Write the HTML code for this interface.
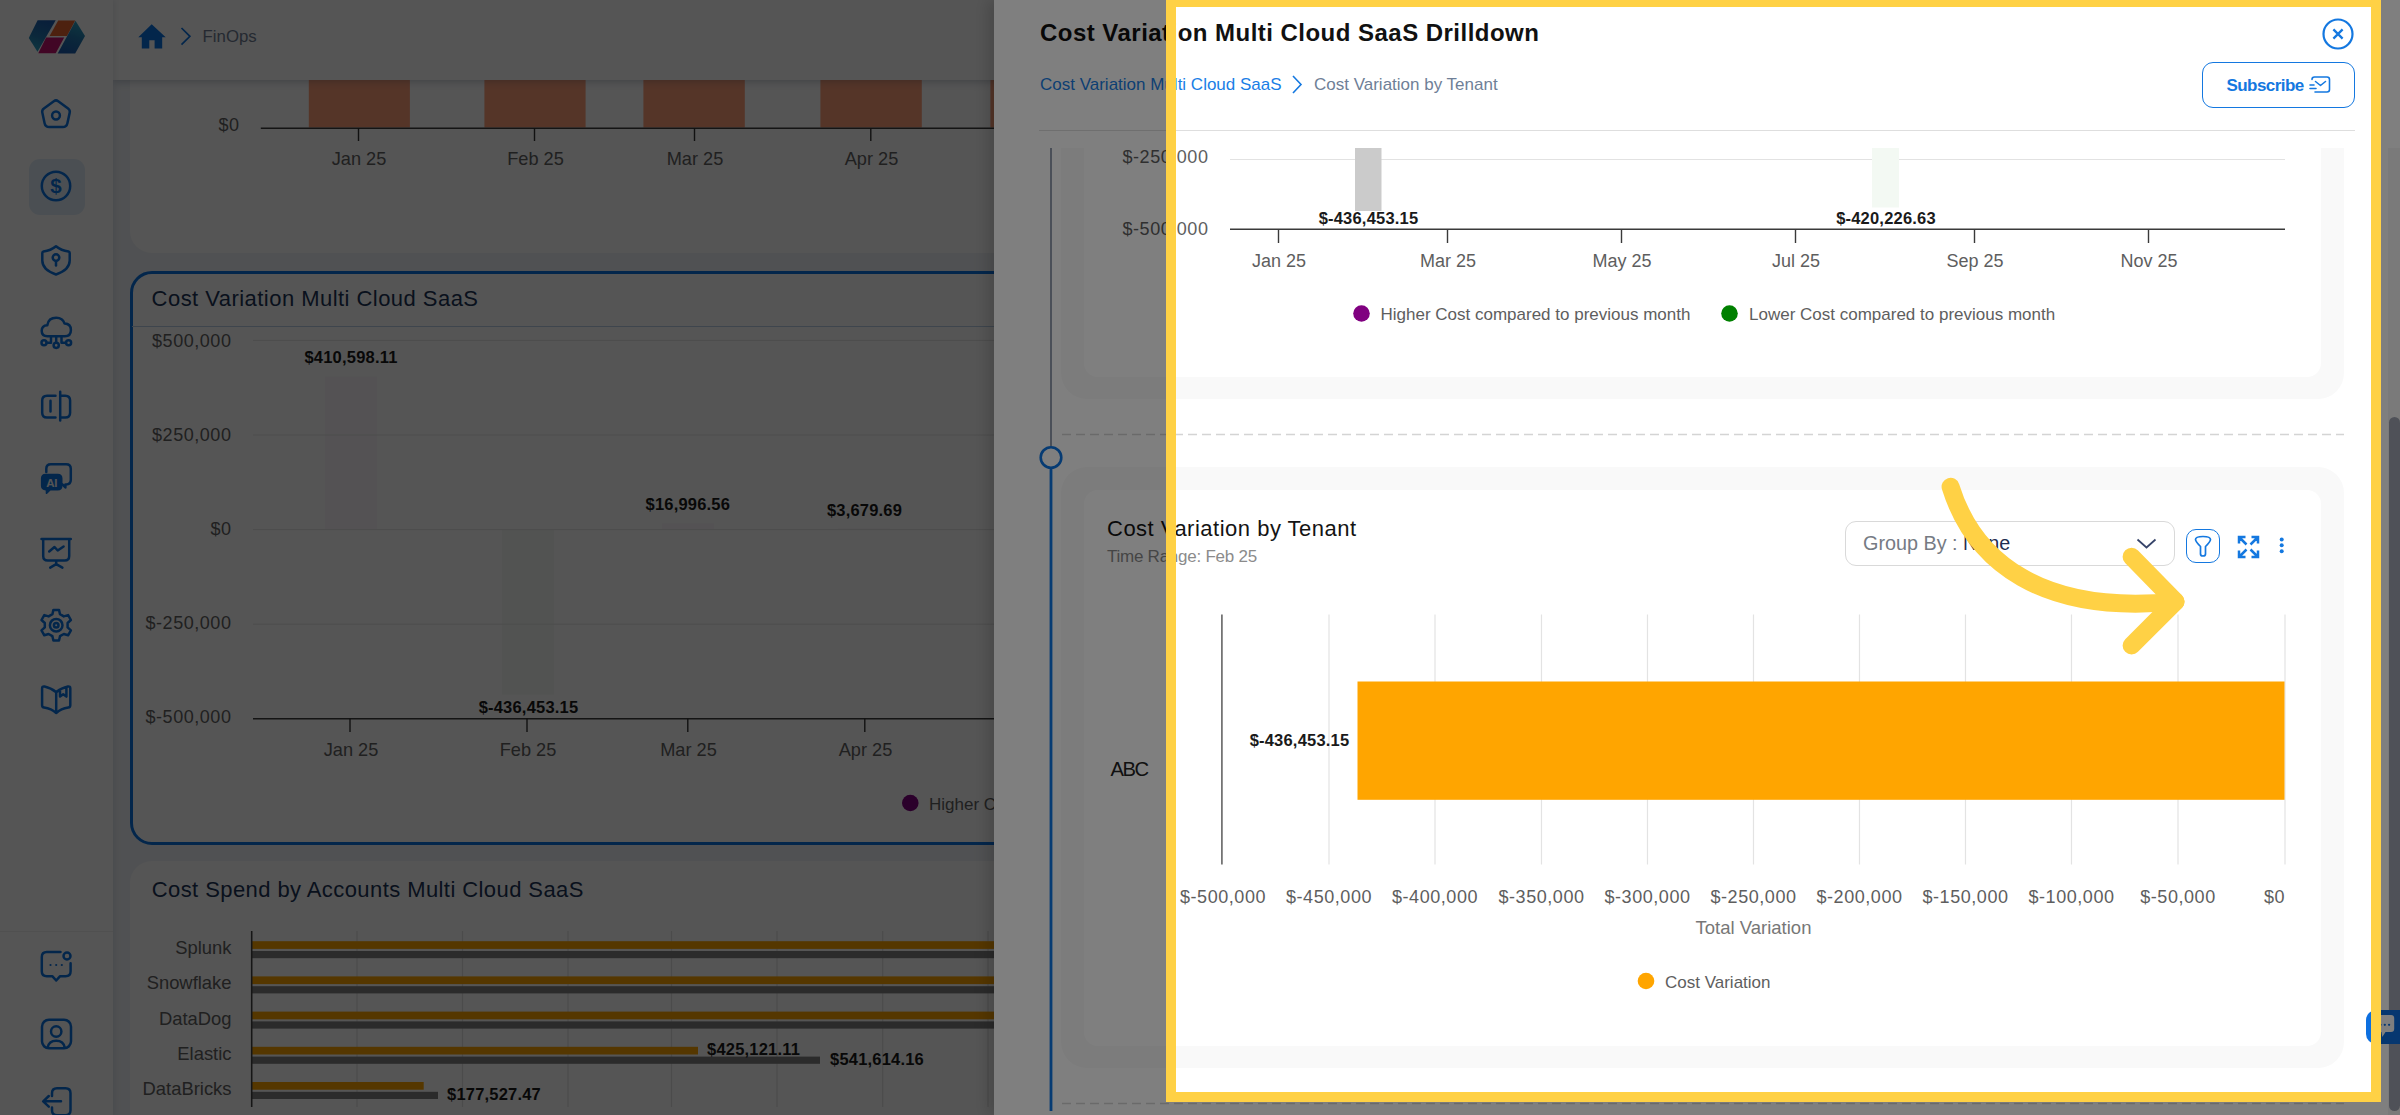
<!DOCTYPE html>
<html lang="en">
<head>
<meta charset="utf-8">
<title>Cost Variation Multi Cloud SaaS Drilldown</title>
<style>
*{box-sizing:border-box;margin:0;padding:0}
html,body{width:2400px;height:1115px;overflow:hidden;background:#fff}
body{font-family:"Liberation Sans",sans-serif;color:#1a2b4a;position:relative}
.abs{position:absolute}
svg{position:absolute;left:0;top:0;overflow:visible}
svg text{font-family:"Liberation Sans",sans-serif}
/* ---------- base app ---------- */
#app{position:absolute;left:0;top:0;width:2400px;height:1115px;background:#f1f4f8;overflow:hidden}
#sidebar{position:absolute;left:0;top:0;width:113px;height:1115px;background:#fff;z-index:3;box-shadow:2px 0 6px rgba(40,60,90,.1)}
#sidebar .sep{position:absolute;left:0;top:931px;width:113px;height:1px;background:#f0f0f0}
#sidebar .sel{position:absolute;left:29px;top:158.5px;width:56px;height:56.5px;border-radius:11px;background:#e2eef9}
#topbar{position:absolute;left:113px;top:0;width:2287px;height:79.8px;background:#fff;z-index:2;box-shadow:0 2px 8px rgba(40,60,90,.28)}
#topbar .crumb{position:absolute;left:89.6px;top:26.6px;font-size:16.8px;color:#6f7d94}
.card{position:absolute;background:#fff;border-radius:22px}
#card1{left:130px;top:-40px;width:2240px;height:293px}
#card2{left:130px;top:270.8px;width:2240px;height:574.2px;border:3.1px solid #0b73e2}
#card3{left:130px;top:860.6px;width:2240px;height:400px}
.ctitle{position:absolute;left:18.6px;font-size:22px;letter-spacing:.46px;color:#1d3557;white-space:nowrap}
/* ---------- overlays ---------- */
#backdrop{position:absolute;left:0;top:0;width:2400px;height:1115px;background:rgba(0,0,0,.33);z-index:10}
#drawer{position:absolute;left:994px;top:0;width:1406px;box-shadow:-6px 0 14px rgba(0,0,0,.16);height:1115px;background:#fff;z-index:11;overflow:hidden}
#dim{position:absolute;left:1166px;top:-3px;width:1214.5px;height:1104.8px;box-shadow:0 0 0 3000px rgba(0,0,0,.5);z-index:20;pointer-events:none}
#hl{position:absolute;left:1166px;top:-3px;width:1214.5px;height:1104.8px;border:10px solid #ffd145;border-right-width:10.3px;z-index:21}
#arrow{z-index:22}
</style>
</head>
<body>
<div id="app">
  <div id="sidebar"><div class="sel"></div><div class="sep"></div><svg width="113" height="1115" viewBox="0 0 113 1115">
<defs>
<linearGradient id="lg1" x1="0.6" y1="0" x2="0.3" y2="1"><stop offset="0" stop-color="#1c5cad"/><stop offset=".55" stop-color="#2278b0"/><stop offset="1" stop-color="#2ba3c2"/></linearGradient>
<linearGradient id="lg2" x1="0.7" y1="0" x2="0.4" y2="1"><stop offset="0" stop-color="#2ba3c2"/><stop offset=".5" stop-color="#2278b0"/><stop offset="1" stop-color="#1c5cad"/></linearGradient>
</defs>
<!-- logo -->
<polygon points="37.600,20.300 55.700,20.300 37.500,51.700 28.800,37.900" fill="url(#lg1)"/>
<polygon points="58.200,20.500 75.200,20.500 67,35.900 49.600,35.900" fill="#e8632f"/>
<polygon points="46.100,37.600 64.200,37.600 55.700,53.300 38.300,53.300" fill="#c4126f"/>
<polygon points="75.500,20.800 85,35.900 75.200,53.400 57.700,53.400" fill="url(#lg2)"/>
<g fill="none" stroke="#0b73e2" stroke-width="2.500" stroke-linecap="round" stroke-linejoin="round">
<!-- home pentagon -->
<path d="M53.800 101.200q2.200-1.600 4.400 0l9.900 7.200q2.200 1.600 1.600 4.200l-2.300 10.600q-.8 3.800-4.600 3.800h-13.600q-3.800 0-4.600-3.800l-2.300-10.600q-.6-2.600 1.600-4.200z"/>
<circle cx="56" cy="115.500" r="3.900"/>
<!-- dollar -->
<circle cx="56" cy="186" r="14.200"/>
<!-- shield -->
<path d="M56 246.200c-4 3.300-9 4.800-12.500 5.300q-1.200.3-1.200 1.500v7.500c0 7 5 11 13.700 14c8.700-3 13.700-7 13.700-14v-7.500q0-1.200-1.200-1.500c-3.500-.5-8.500-2-12.500-5.300z"/>
<circle cx="56" cy="257.600" r="3.300"/><path d="M56 261v4.500"/>
<!-- cloud -->
<path d="M47.500 336.300q-5.800 0-5.800-5.500q0-5.300 5.600-5.600q1.200-7.400 8.900-7.400q6.500 0 8.400 5.800q6.300.3 6.300 6.400q0 6.300-6 6.300z"/>
<circle cx="44" cy="342.700" r="2.500"/><circle cx="56.200" cy="345.300" r="2.600"/><circle cx="68.600" cy="342.700" r="2.500"/>
<path d="M56.200 336.500v6M51 336.500v6.200h-4.300M61.500 336.500v6.200h4.300"/>
<!-- compare -->
<path d="M55.500 395.800h-8.500q-4.800 0-4.800 4.800v12.200q0 4.800 4.800 4.800h8.500M60.200 391.800v28.800M50.500 400.800v10.800M60.500 395.800h4.800q4.800 0 4.800 4.800v12.200q0 4.800-4.800 4.800h-4.800"/>
<!-- AI chat -->
<path d="M46.300 472v-3.200q0-4.600 4.600-4.600h15.300q4.600 0 4.600 4.600v11q0 4.600-4.600 4.600h-.8v3l-3-3"/>
<!-- monitor -->
<path d="M41.500 539h29.300M43.200 539v17q0 4.500 4.500 4.500h17q4.500 0 4.500-4.500v-17M49.200 551.500l5.300-4.500 3.200 3.500 5.900-4M56.200 560.500v3.600l-6 3.500M56.200 564.100l6.200 3.500"/>
<!-- gear -->
<path d="M60.0 614.2L59.0 609.9L53.4 609.9L52.4 614.2L48.6 616.4L44.3 615.1L41.5 620.0L44.8 623.0L44.8 627.4L41.5 630.4L44.3 635.3L48.6 634.0L52.4 636.2L53.4 640.5L59.0 640.5L60.0 636.2L63.8 634.0L68.1 635.3L70.9 630.4L67.6 627.4L67.6 623.0L70.9 620.0L68.1 615.1L63.8 616.4z"/>
<circle cx="56.200" cy="625.200" r="6.300"/><circle cx="56.200" cy="625.200" r="2.300"/>
<!-- book -->
<path d="M56.200 692.200v20.800M56.200 692.200c-4.200-3.500-9.200-5.200-11.700-5.700q-2.400-.4-2.400 2v16.700q0 2 2 2.300c4.100.6 8.400 2.100 12.100 5.500c3.700-3.400 8-4.900 12.100-5.500q2-.3 2-2.300v-16.700q0-2.400-2.400-2c-2.500.5-7.500 2.200-11.700 5.700M60 689.800v6.800l3.200-2.300 3.200 2.300v-9.300"/>
<!-- chat dots -->
<path d="M60.500 952h-13.700q-5 0-5 5v14.300q0 5 5 5h5.700l3.700 4.200 3.700-4.200h5.700q5 0 5-5v-8"/>
<circle cx="67" cy="956" r="3.500"/>
<!-- user -->
<rect x="42" y="1019.700" width="29" height="28.600" rx="7"/><circle cx="56.200" cy="1031.500" r="5.200"/><path d="M47.600 1047.800q1.200-7 8.600-7t8.600 7"/>
<!-- logout -->
<path d="M52 1096v-2.800q0-5 5-5h8.500q5 0 5 5v17q0 5-5 5h-8.500q-5 0-5-5v-2.800M61 1101.300h-17.500M48.800 1096l-5.600 5.300 5.600 5.300"/>
</g>
<g fill="#0b73e2"><circle cx="50.500" cy="965" r="1.100"/><circle cx="56.200" cy="965" r="1.100"/><circle cx="61.800" cy="965" r="1.100"/>
<path d="M45.600 473.800h12.200q4.700 0 4.700 4.700v7.300q0 4.700-4.700 4.700h-7.300l-3.300 3.300q-1.200.7-1.500-.6v-2.800q-4.800-.3-4.800-4.600v-7.300q0-4.700 4.700-4.700z"/></g>
<text x="56" y="193.200" font-size="20.500" font-weight="700" fill="#0b73e2" text-anchor="middle">$</text>
<text x="51.800" y="487" font-size="11.500" font-weight="700" fill="#fff" text-anchor="middle" letter-spacing="-.3">AI</text>
</svg>
</div>
  <div id="topbar"><div class="crumb">FinOps</div><svg style="left:-113px" width="400" height="79" viewBox="0 0 400 79"><path d="M151.700 24.300l14 13h-3.500v11.100h-7.600v-8.100h-5.300v8.100h-7.500v-11.100h-3.500z" fill="#0b73e2"/><path d="M181.500 28l8.400 8.300-8.400 8.300" fill="none" stroke="#0b73e2" stroke-width="1.700"/></svg>
</div>
  <div class="card" id="card1"><!--CARD1--></div>
  <div class="card" id="card2"><div class="ctitle" style="top:12.1px">Cost Variation Multi Cloud SaaS</div><!--CARD2--></div>
  <div class="card" id="card3"><div class="ctitle" style="top:16.6px;left:21.7px;letter-spacing:.42px">Cost Spend by Accounts Multi Cloud SaaS</div><!--CARD3--></div>
  <svg width="2400" height="1115" viewBox="0 0 2400 1115">
<!-- card1 chart -->
<g fill="#ffa07a"><rect x="308.800" y="40" width="101.100" height="87.500"/><rect x="484.400" y="40" width="101.200" height="87.500"/><rect x="643.400" y="40" width="101.400" height="87.500"/><rect x="820.400" y="40" width="101.400" height="87.500"/><rect x="990.400" y="40" width="101.400" height="87.500"/></g>
<line x1="260.800" y1="128.200" x2="2300" y2="128.200" stroke="#3c3c3c" stroke-width="1.500"/>
<path d="M358.500 128v13M534.500 128v13M694.500 128v13M870.800 128v13" stroke="#333" stroke-width="1.400"/>
<text x="239.500" y="131.200" font-size="18" fill="#626262" text-anchor="end" letter-spacing=".55">$0</text>
<g font-size="18.200" fill="#626262" text-anchor="middle"><text x="359" y="164.600">Jan 25</text><text x="535.500" y="164.600">Feb 25</text><text x="695" y="164.600">Mar 25</text><text x="871.500" y="164.600">Apr 25</text></g>
<!-- card2 chart -->
<line x1="132" y1="326.500" x2="2368" y2="326.500" stroke="#b9cfe8" stroke-width="1"/>
<rect x="325" y="376.500" width="52" height="153" fill="#fbf7fb"/>
<rect x="502" y="529.600" width="52" height="165" fill="#f5f9f5"/>
<rect x="662" y="523.300" width="52" height="6.300" fill="#fbf7fb"/><rect x="838" y="528.200" width="52" height="1.400" fill="#fbf7fb"/>
<path d="M253 340.400h2050M253 435h2050M253 529.600h2050M253 624.200h2050" stroke="#e6e6e6" stroke-width="1"/>
<line x1="253" y1="718.800" x2="2300" y2="718.800" stroke="#3c3c3c" stroke-width="1.500"/>
<path d="M350 718.500v13.500M527 718.500v13.500M687.800 718.500v13.500M864.800 718.500v13.500" stroke="#333" stroke-width="1.400"/>
<g font-size="18" fill="#626262" text-anchor="end" letter-spacing=".55"><text x="231.500" y="346.700">$500,000</text><text x="231.500" y="440.700">$250,000</text><text x="231.500" y="534.500">$0</text><text x="231.500" y="629.400">$-250,000</text><text x="231.500" y="723">$-500,000</text></g>
<g font-size="18.200" fill="#626262" text-anchor="middle"><text x="351" y="756.400">Jan 25</text><text x="528" y="756.400">Feb 25</text><text x="688.500" y="756.400">Mar 25</text><text x="865.500" y="756.400">Apr 25</text></g>
<g font-size="16.500" font-weight="700" fill="#1a1a1a" text-anchor="middle" letter-spacing=".2"><text x="351" y="362.600">$410,598.11</text><text x="528.500" y="712.800">$-436,453.15</text><text x="687.800" y="510">$16,996.56</text><text x="864.500" y="516.200">$3,679.69</text></g>
<circle cx="910.300" cy="803" r="8.300" fill="#800080"/>
<text x="929" y="810.200" font-size="17" fill="#626262">Higher Cost compared to previous month</text>
<!-- card3 chart -->
<path d="M357 931v176M462.500 931v176M568 931v176M671.500 931v176M777 931v176M882.700 931v176M988 931v176" stroke="#e2e2e2" stroke-width="1.200"/>
<g fill="#ffa500"><rect x="252" y="941.200" width="1900" height="7.700"/><rect x="252" y="976.400" width="1800" height="7.700"/><rect x="252" y="1011.600" width="1700" height="7.700"/><rect x="252" y="1046.800" width="446" height="7.700"/><rect x="252" y="1082" width="171.700" height="7.700"/></g>
<g fill="#808080"><rect x="252" y="951" width="1950" height="7.200"/><rect x="252" y="986.200" width="1850" height="7.200"/><rect x="252" y="1021.400" width="1750" height="7.200"/><rect x="252" y="1056.600" width="568" height="7.200"/><rect x="252" y="1091.800" width="186" height="7.200"/></g>
<line x1="251.700" y1="931" x2="251.700" y2="1107" stroke="#444" stroke-width="1.600"/>
<g font-size="18.400" fill="#626262" text-anchor="end"><text x="231.500" y="953.700">Splunk</text><text x="231.500" y="988.900">Snowflake</text><text x="231.500" y="1024.600">DataDog</text><text x="231.500" y="1059.800">Elastic</text><text x="231.500" y="1095">DataBricks</text></g>
<g font-size="16.500" font-weight="700" fill="#1a1a1a" letter-spacing=".2"><text x="707" y="1054.700">$425,121.11</text><text x="830" y="1064.800">$541,614.16</text><text x="447" y="1100">$177,527.47</text></g>
</svg>

</div>
<div id="backdrop"></div>
<div id="drawer"><div id="dwrap" style="position:absolute;left:-1px;top:0;width:1407px;height:1115px"><div class="abs" style="left:47px;top:18.600px;font-size:24px;font-weight:700;color:#111;white-space:nowrap;letter-spacing:.47px">Cost Variation Multi Cloud SaaS Drilldown</div>
<div class="abs" style="left:47px;top:74.900px;font-size:17px;color:#1a7ee6;white-space:nowrap">Cost Variation Multi Cloud SaaS</div>
<div class="abs" style="left:321px;top:74.900px;font-size:17px;color:#6f7f97;white-space:nowrap">Cost Variation by Tenant</div>
<div class="abs" style="left:1209px;top:62px;width:153px;height:46px;border:1.7px solid #1478e0;border-radius:11px"></div>
<div class="abs" style="left:1233.500px;top:76px;font-size:17px;letter-spacing:-.55px;font-weight:700;color:#1478e0;white-space:nowrap">Subscribe</div>
<div class="abs" style="left:46px;top:130px;width:1316px;height:1px;background:#dedede"></div>
<!-- scroll area -->
<div class="abs" id="scroll" style="left:0;top:148px;width:1395px;height:967px;overflow:hidden">
  <div class="abs" style="left:68px;top:-200px;width:1283px;height:451px;background:#f9f9f9;border-radius:26px"></div>
  <div class="abs" style="left:91px;top:-200px;width:1237px;height:429px;background:#fff;border-radius:14px"></div>
  <div class="abs" style="left:68px;top:319px;width:1283px;height:601px;background:#f9f9f9;border-radius:26px"></div>
  <div class="abs" style="left:91px;top:342px;width:1237px;height:556px;background:#fff;border-radius:14px"></div>
  <div class="abs" style="left:114px;top:368px;font-size:22px;color:#141414;white-space:nowrap;letter-spacing:.5px">Cost Variation by Tenant</div>
  <div class="abs" style="left:114px;top:399.100px;font-size:17px;letter-spacing:-.25px;color:#8b8b8b;white-space:nowrap">Time Range: Feb 25</div>
  <div class="abs" style="left:852px;top:373px;width:330px;height:45px;border:1px solid #d9d9d9;border-radius:11px"></div>
  <div class="abs" style="left:870px;top:384px;font-size:19.800px;color:#767b84;white-space:pre">Group By : <span style="color:#1f2d50">None</span></div>
  <div class="abs" style="left:1193px;top:381px;width:34px;height:34px;border:1.5px solid #1478e0;border-radius:10px"></div>
</div>
<svg style="left:-993px" width="2400" height="1115" viewBox="0 0 2400 1115">
  <defs><clipPath id="sc"><rect x="993" y="148" width="1407" height="967"/></clipPath></defs>
  <!-- close -->
  <circle cx="2338" cy="34" r="14.5" fill="none" stroke="#1478e0" stroke-width="2.2"/>
  <path d="M2333.400 29.400l9.200 9.200M2342.600 29.400l-9.200 9.200" stroke="#1478e0" stroke-width="2.300" fill="none"/>
  <!-- breadcrumb chevron -->
  <path d="M1293 76l8 8.5-8 8.5" fill="none" stroke="#1478e0" stroke-width="1.6"/>
  <!-- subscribe icon -->
  <g fill="none" stroke="#1478e0" stroke-width="1.6" stroke-linecap="round" stroke-linejoin="round">
    <path d="M2312 79.500q0-2.500 2.500-2.500h12.500q2.500 0 2.500 2.500v10q0 2.500-2.500 2.500h-12"/>
    <path d="M2315.500 81.500l5 4 5-4"/><path d="M2310 85h4M2310 88.500h6"/>
  </g>
  <g clip-path="url(#sc)">
    <!-- timeline -->
    <line x1="1051" y1="148" x2="1051" y2="446" stroke="#2b3f63" stroke-width="1"/>
    <line x1="1051" y1="468" x2="1051" y2="1111" stroke="#0c76e6" stroke-width="2.800"/>
    <circle cx="1051" cy="457.500" r="10.300" fill="#fff" stroke="#0c76e6" stroke-width="2.600"/>
    <line x1="1062" y1="434.500" x2="2344" y2="434.500" stroke="#d4d4d4" stroke-width="1.500" stroke-dasharray="9 5"/>
    <line x1="1062" y1="1103.500" x2="2344" y2="1103.500" stroke="#d4d4d4" stroke-width="1.500" stroke-dasharray="9 5"/>
    <!-- chart 1 -->
    <g font-size="18" fill="#5e5e5e" text-anchor="end" letter-spacing=".55"><text x="1208.500" y="163">$-250,000</text><text x="1208.500" y="234.500">$-500,000</text></g>
    <line x1="1230" y1="159.500" x2="2285" y2="159.500" stroke="#e2e2e2" stroke-width="1"/>
    <rect x="1355" y="140" width="26.500" height="71" fill="#cbcbcb"/>
    <rect x="1872" y="140" width="27" height="67.500" fill="#f3f9f3"/>
    <line x1="1230" y1="229.300" x2="2285" y2="229.300" stroke="#3a3a3a" stroke-width="1.6"/>
    <path d="M1278.500 229v14M1447.500 229v14M1621.500 229v14M1795.500 229v14M1974.500 229v14M2148.500 229v14" stroke="#3a3a3a" stroke-width="1.4"/>
    <g font-size="18" fill="#5e5e5e" text-anchor="middle"><text x="1279" y="266.800">Jan 25</text><text x="1448" y="266.800">Mar 25</text><text x="1622" y="266.800">May 25</text><text x="1796" y="266.800">Jul 25</text><text x="1975" y="266.800">Sep 25</text><text x="2149" y="266.800">Nov 25</text></g>
    <g font-size="16.500" font-weight="700" fill="#1a1a1a" text-anchor="middle" letter-spacing=".2"><text x="1368.500" y="224">$-436,453.15</text><text x="1886" y="224">$-420,226.63</text></g>
    <circle cx="1361.500" cy="313.500" r="8.300" fill="#800080"/><circle cx="1729.500" cy="313.500" r="8.300" fill="#008000"/>
    <g font-size="17" fill="#5e5e5e"><text x="1380.500" y="320">Higher Cost compared to previous month</text><text x="1749" y="320">Lower Cost compared to previous month</text></g>
    <!-- select chevron, filter, expand, more -->
    <path d="M2137.500 539.500l9 8 9-8" fill="none" stroke="#36446a" stroke-width="1.700"/>
    <path d="M2195.500 539.500q0-3 7.500-3t7.500 3q0 2-5 7v7.500q0 2-2.500 2t-2.500-2v-7.500q-5-5-5-7z" fill="none" stroke="#1478e0" stroke-width="1.7" stroke-linejoin="round"/>
    <g fill="none" stroke="#1478e0" stroke-width="2.500"><path d="M2239 543.500v-6.500h6.500M2239.500 537.500l7 7M2258 543.500v-6.500h-6.500M2257.500 537.500l-7 7M2239 550.500v6.500h6.500M2239.500 556.500l7-7M2258 550.500v6.500h-6.500M2257.500 556.500l-7-7"/></g>
    <g fill="#1478e0"><circle cx="2281.700" cy="539.500" r="2"/><circle cx="2281.700" cy="545.300" r="2"/><circle cx="2281.700" cy="551.200" r="2"/></g>
    <!-- chart 2 -->
    <path d="M1329 614.500v250M1435 614.500v250M1541.500 614.500v250M1647.500 614.500v250M1753.500 614.500v250M1859.500 614.500v250M1965.500 614.500v250M2071.500 614.500v250M2178 614.500v250M2285 614.500v250" stroke="#e3e3e3" stroke-width="1.2"/>
    <line x1="1221.900" y1="614.500" x2="1221.900" y2="864.500" stroke="#6e6e6e" stroke-width="1.700"/>
    <rect x="1357.500" y="681.500" width="927" height="118.300" fill="#ffa500"/>
    <text x="1299.500" y="745.500" font-size="16.500" font-weight="700" fill="#1a1a1a" text-anchor="middle" letter-spacing=".2">$-436,453.15</text>
    <text x="1110.500" y="776" font-size="20.200" fill="#222" letter-spacing="-1.5">ABC</text>
    <g font-size="18" fill="#5e5e5e" text-anchor="middle" letter-spacing=".55"><text x="1223" y="903">$-500,000</text><text x="1329" y="903">$-450,000</text><text x="1435" y="903">$-400,000</text><text x="1541.500" y="903">$-350,000</text><text x="1647.500" y="903">$-300,000</text><text x="1753.500" y="903">$-250,000</text><text x="1859.500" y="903">$-200,000</text><text x="1965.500" y="903">$-150,000</text><text x="2071.500" y="903">$-100,000</text><text x="2178" y="903">$-50,000</text><text x="2285" y="903" text-anchor="end">$0</text></g>
    <text x="1753.500" y="934" font-size="18.500" fill="#777" text-anchor="middle">Total Variation</text>
    <circle cx="1646" cy="981" r="8.300" fill="#ffa500"/>
    <text x="1665" y="987.500" font-size="17" fill="#5e5e5e">Cost Variation</text>
  </g>
</svg>
<!-- scrollbar -->
<div class="abs" style="left:1395px;top:148px;width:12px;height:967px;background:#f4f4f4"></div>
<div class="abs" style="left:1396px;top:417px;width:11px;height:694px;border-radius:6px;background:#9ea3b0"></div>
<!-- chat widget -->
<div class="abs" style="left:1373px;top:1010.300px;width:60px;height:33.300px;border-radius:10px;background:#0d6fe0"></div>
<svg style="left:-993px" width="2400" height="1115" viewBox="0 0 2400 1115"><path d="M2379 1015h12q3.200 0 3.200 3.200v10.600q0 3.200-3.200 3.200h-5.500l-3.200 5-.8-5h-2.500q-3.200 0-3.200-3.200v-10.600q0-3.200 3.200-3.200z" fill="#fff"/><circle cx="2380.500" cy="1024.800" r="1.150" fill="#0d6fe0"/><circle cx="2384.800" cy="1024.800" r="1.150" fill="#0d6fe0"/><circle cx="2389.100" cy="1024.800" r="1.150" fill="#0d6fe0"/></svg>
</div></div>
<div id="dim"></div>
<div id="hl"></div>
<svg id="arrow" width="2400" height="1115" viewBox="0 0 2400 1115"><g fill="none" stroke="#ffd145" stroke-width="18" stroke-linecap="round" stroke-linejoin="round"><path d="M1950.600 486.800C1974 562 2042 615 2175.500 601.600"/><path d="M2131.600 556.800l43.900 44.800-43.900 43.900"/></g>
</svg>
</body>
</html>
